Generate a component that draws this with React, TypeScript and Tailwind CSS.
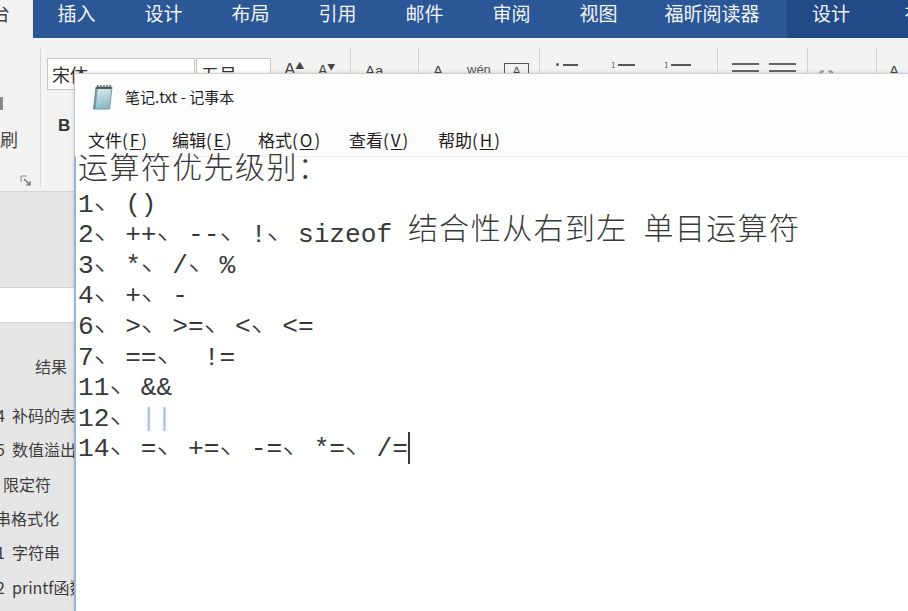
import React from 'react'

const tabs = [
  { label: '插入', w: 'w-[87px]' },
  { label: '设计', w: 'w-[87px]' },
  { label: '布局', w: 'w-[87px]' },
  { label: '引用', w: 'w-[87px]' },
  { label: '邮件', w: 'w-[87px]' },
  { label: '审阅', w: 'w-[87px]' },
  { label: '视图', w: 'w-[87px]' },
  { label: '福昕阅读器', w: 'w-[140px]' },
]

const menus = [
  { label: '文件', key: 'F', w: 'w-[84px]' },
  { label: '编辑', key: 'E', w: 'w-[86px]' },
  { label: '格式', key: 'O', w: 'w-[91px]' },
  { label: '查看', key: 'V', w: 'w-[89px]' },
  { label: '帮助', key: 'H', w: 'w-[70px]' },
]

const lines = [
  '运算符优先级别：',
  '1、()',
  '2、++、--、!、sizeof 结合性从右到左 单目运算符',
  '3、*、/、%',
  '4、+、-',
  '6、>、>=、<、<=',
  '7、==、 !=',
  '11、&&',
  '12、||',
  '14、=、+=、-=、*=、/=',
]

const navRows = [
  { num: '4', text: '补码的表示' },
  { num: '5', text: '数值溢出' },
  { num: '', text: '限定符', pad: 'ml-[3px]' },
  { num: '', text: '串格式化', pad: '-ml-[5px]' },
  { num: '1', text: '字符串' },
  { num: '2', text: 'printf函数' },
]

function NotepadIcon() {
  return (
    <svg width="24" height="28" viewBox="0 0 24 28">
      <defs>
        <linearGradient id="pg" x1="0" y1="0" x2="0.3" y2="1">
          <stop offset="0" stopColor="#e4f3f4" />
          <stop offset="1" stopColor="#8fbcc6" />
        </linearGradient>
      </defs>
      <path d="M6 4 L22 4 L19.5 26 L3.5 26 Z" fill="url(#pg)" stroke="#6f98a3" strokeWidth="1" />
      <path d="M6 4 L8 4 L5.5 26 L3.5 26 Z" fill="#5d8792" opacity="0.7" />
      <path d="M6.5 5 L21.5 5" stroke="#3f3f3f" strokeWidth="1.6" />
      {[8, 11, 14, 17, 20].map(x => (
        <path key={x} d={`M${x} 2 L${x - 0.3} 6`} stroke="#555" strokeWidth="1.2" />
      ))}
    </svg>
  )
}

function Line({ text, cursor }: { text: string; cursor?: boolean }) {
  const runs = text.match(/[\x00-\x7f]+|[^\x00-\x7f]+/g) ?? []
  return (
    <div className="h-[30.6px] leading-[30.6px] whitespace-pre">
      {runs.map((r, i) =>
        /[\x00-\x7f]/.test(r[0]) ? (
          <span key={i} className={r === '||' ? 'text-[#a9c1dc]' : ''}>
            {r}
          </span>
        ) : (
          <span
            key={i}
            className="relative -top-[3px] font-['Noto_Sans_CJK_SC',sans-serif] text-[30px] tracking-[1.4px] leading-[10px] font-light"
          >
            {r}
          </span>
        )
      )}
      {cursor && <span className="inline-block w-[2px] h-[32px] -mt-[10px] align-[-8px] bg-[#3a3a3a]" />}
    </div>
  )
}

function Sep() {
  return <div className="w-[1px] h-[40px] -mt-[10px] bg-[#d2d2d2]" />
}

export default function App() {
  return (
    <div className="relative w-[908px] h-[611px] overflow-hidden flex flex-col bg-[#f3f3f3] font-['Noto_Sans_CJK_SC',sans-serif] text-[#333]">
      {/* Word tab strip */}
      <div className="flex h-[38px] shrink-0">
        <div className="w-[33px] shrink-0 overflow-hidden bg-[#f3f3f3] pt-[1px] text-[19px] leading-[24px] text-[#444]">
          <span className="block -ml-[9px]">台</span>
        </div>
        <div className="flex-1 min-w-0 overflow-hidden flex bg-[#2b5797] text-[19px] leading-[24px] text-[#f2f5fa]">
          {tabs.map(t => (
            <div key={t.label} className={`${t.w} shrink-0 flex justify-center pt-[1px]`}>
              {t.label}
            </div>
          ))}
          <div className="ml-[5px] flex-1 min-w-0 overflow-hidden flex bg-[#214a87]">
            <div className="w-[88px] shrink-0 flex justify-center pt-[1px]">设计</div>
            <div className="w-[97px] shrink-0 flex justify-center pt-[1px]">布局</div>
          </div>
        </div>
      </div>

      {/* Ribbon */}
      <div className="h-[154px] shrink-0 flex border-b border-[#d2d2d2] bg-[#f3f3f3]">
        <div className="w-[41px] shrink-0 mt-[10px] mb-[4px] border-r border-[#d6d6d6] flex flex-col">
          <div className="mt-[49px] w-[3px] h-[13px] bg-[#8a8a8a]" />
          <div className="mt-[20px] h-[18px] text-[18px] leading-[18px] text-[#444]">刷</div>
          <svg className="mt-[27px] ml-[20px]" width="12" height="12" viewBox="0 0 12 12">
            <path d="M1 1 H7 M1 1 V7" stroke="#8a8a8a" strokeWidth="1" fill="none" />
            <path d="M4 4 L10 10 M10 6 V10 H6" stroke="#666" strokeWidth="1.2" fill="none" />
          </svg>
        </div>

        <div className="flex-1 min-w-0 flex flex-col pt-[20px]">
          <div className="flex items-start">
            <div className="ml-[6px] w-[148px] shrink-0 h-[32px] bg-white border border-[#c6c6c6] pl-[4px] pt-[2px] text-[18px] leading-[26px] text-[#333]">
              宋体
            </div>
            <div className="ml-[1px] w-[75px] shrink-0 h-[32px] bg-white border border-[#c6c6c6] pl-[4px] pt-[2px] text-[18px] leading-[26px] text-[#333]">
              五号
            </div>
            <div className="ml-[13px] w-[20px] shrink-0 flex items-start pt-[3px] text-[#444]">
              <span className="text-[17px] leading-[18px] font-['Liberation_Sans',sans-serif]">A</span>
              <span className="text-[9px] leading-[9px]">▲</span>
            </div>
            <div className="ml-[14px] w-[20px] shrink-0 flex items-start pt-[5px] text-[#444]">
              <span className="text-[14px] leading-[15px] font-['Liberation_Sans',sans-serif]">A</span>
              <span className="text-[8px] leading-[8px]">▼</span>
            </div>
            <div className="ml-[12px]">
              <Sep />
            </div>
            <div className="ml-[14px] w-[24px] shrink-0 pt-[5px] text-[15px] leading-[16px] text-[#444] font-['Liberation_Sans',sans-serif]">
              Aa
            </div>
            <div className="ml-[29px]">
              <Sep />
            </div>
            <div className="ml-[14px] w-[14px] shrink-0 pt-[5px] text-[15px] leading-[16px] text-[#444] font-['Liberation_Sans',sans-serif]">
              A
            </div>
            <div className="ml-[20px] w-[32px] shrink-0 pt-[5px] text-[13px] leading-[14px] text-[#555] font-['Liberation_Sans',sans-serif]">
              wén
            </div>
            <div className="ml-[5px] mt-[5px] w-[25px] shrink-0 h-[20px] border-[1.5px] border-[#555] flex justify-center text-[13px] leading-[16px] text-[#444] font-['Liberation_Sans',sans-serif]">
              A
            </div>
            <div className="ml-[10px]">
              <Sep />
            </div>
            <div className="ml-[16px] w-[22px] shrink-0 pt-[5px] flex items-center gap-[4px]">
              <span className="w-[3px] h-[3px] rounded-full bg-[#555]" />
              <span className="flex-1 h-[2px] bg-[#555]" />
            </div>
            <div className="ml-[33px] w-[24px] shrink-0 pt-[3px] flex items-center gap-[3px]">
              <span className="text-[8px] leading-[8px] text-[#555]">1</span>
              <span className="flex-1 h-[2px] bg-[#555]" />
            </div>
            <div className="ml-[29px] w-[27px] shrink-0 pt-[3px] flex items-center gap-[3px]">
              <span className="text-[8px] leading-[8px] text-[#555]">1</span>
              <span className="flex-1 h-[2px] bg-[#555]" />
            </div>
            <div className="ml-[26px]">
              <Sep />
            </div>
            <div className="ml-[14px] w-[27px] shrink-0 pt-[5px] flex flex-col gap-[5px]">
              <span className="h-[2px] bg-[#666]" />
              <span className="h-[2px] bg-[#666]" />
            </div>
            <div className="ml-[10px] w-[27px] shrink-0 pt-[5px] flex flex-col gap-[5px]">
              <span className="h-[2px] bg-[#666]" />
              <span className="h-[2px] bg-[#666]" />
            </div>
            <div className="ml-[11px]">
              <Sep />
            </div>
            <div className="ml-[11px] w-[25px] shrink-0 pt-[7px] text-[12px] leading-[12px] text-[#555]">« »</div>
            <div className="ml-[32px]">
              <Sep />
            </div>
            <div className="ml-[12px] pt-[5px] text-[15px] leading-[16px] text-[#444] font-['Liberation_Sans',sans-serif]">
              A
            </div>
          </div>
          <div className="mt-[28px] ml-[17px] h-[16px] text-[17px] leading-[16px] font-bold text-[#333] font-['Liberation_Sans',sans-serif]">
            B
          </div>
        </div>
      </div>

      {/* Navigation pane */}
      <div className="flex-1 flex flex-col bg-[#e6e6e6] overflow-hidden">
        <div className="mt-[95px] h-[36px] shrink-0 bg-white border-y border-[#d0d0d0]" />
        <div className="mt-[34px] h-[18px] leading-[18px] ml-[35px] text-[16px] text-[#444] whitespace-nowrap">结果</div>
        <div className="mt-[22.8px] flex flex-col text-[16px] text-[#3c3c3c]">
          {navRows.map((r, i) => (
            <div key={i} className="h-[34.4px] leading-[34.4px] flex whitespace-nowrap">
              {r.num ? (
                <>
                  <span className="w-[5px] flex justify-end">{r.num}</span>
                  <span className="ml-[7px]">{r.text}</span>
                </>
              ) : (
                <span className={r.pad}>{r.text}</span>
              )}
            </div>
          ))}
        </div>
      </div>

      {/* Notepad window */}
      <div className="absolute left-[74px] top-[73px] right-0 bottom-0 flex flex-col bg-white border-t border-[#cfcfcf] shadow-[0_0_4px_rgba(0,0,0,0.15)]">
        <div className="h-[46px] shrink-0 flex items-center pl-[15px] border-l border-[#c4c4c4] bg-[#fdfdfd]">
          <NotepadIcon />
          <span className="ml-[11px] text-[15px] text-[#1e1e1e]">笔记.txt - 记事本</span>
        </div>
        <div className="h-[36px] shrink-0 flex items-center pt-[3px] pl-[13px] border-l border-[#c4c4c4] bg-[#fdfdfd] text-[17px] text-[#1e1e1e]">
          {menus.map(m => (
            <div key={m.key} className={`${m.w} shrink-0 whitespace-nowrap`}>
              {m.label}
              <span className="tracking-[2px]">
                (<span className="underline underline-offset-2">{m.key}</span>)
              </span>
            </div>
          ))}
        </div>
        <div className="flex-1 pt-[2px] pl-[2px] border-l-2 border-t border-l-[#95b5da] border-t-[#efefef] bg-white font-['Liberation_Mono',monospace] text-[26.2px] text-[#383838]">
          {lines.map((l, i) => (
            <Line key={i} text={l} cursor={i === lines.length - 1} />
          ))}
        </div>
      </div>
    </div>
  )
}
